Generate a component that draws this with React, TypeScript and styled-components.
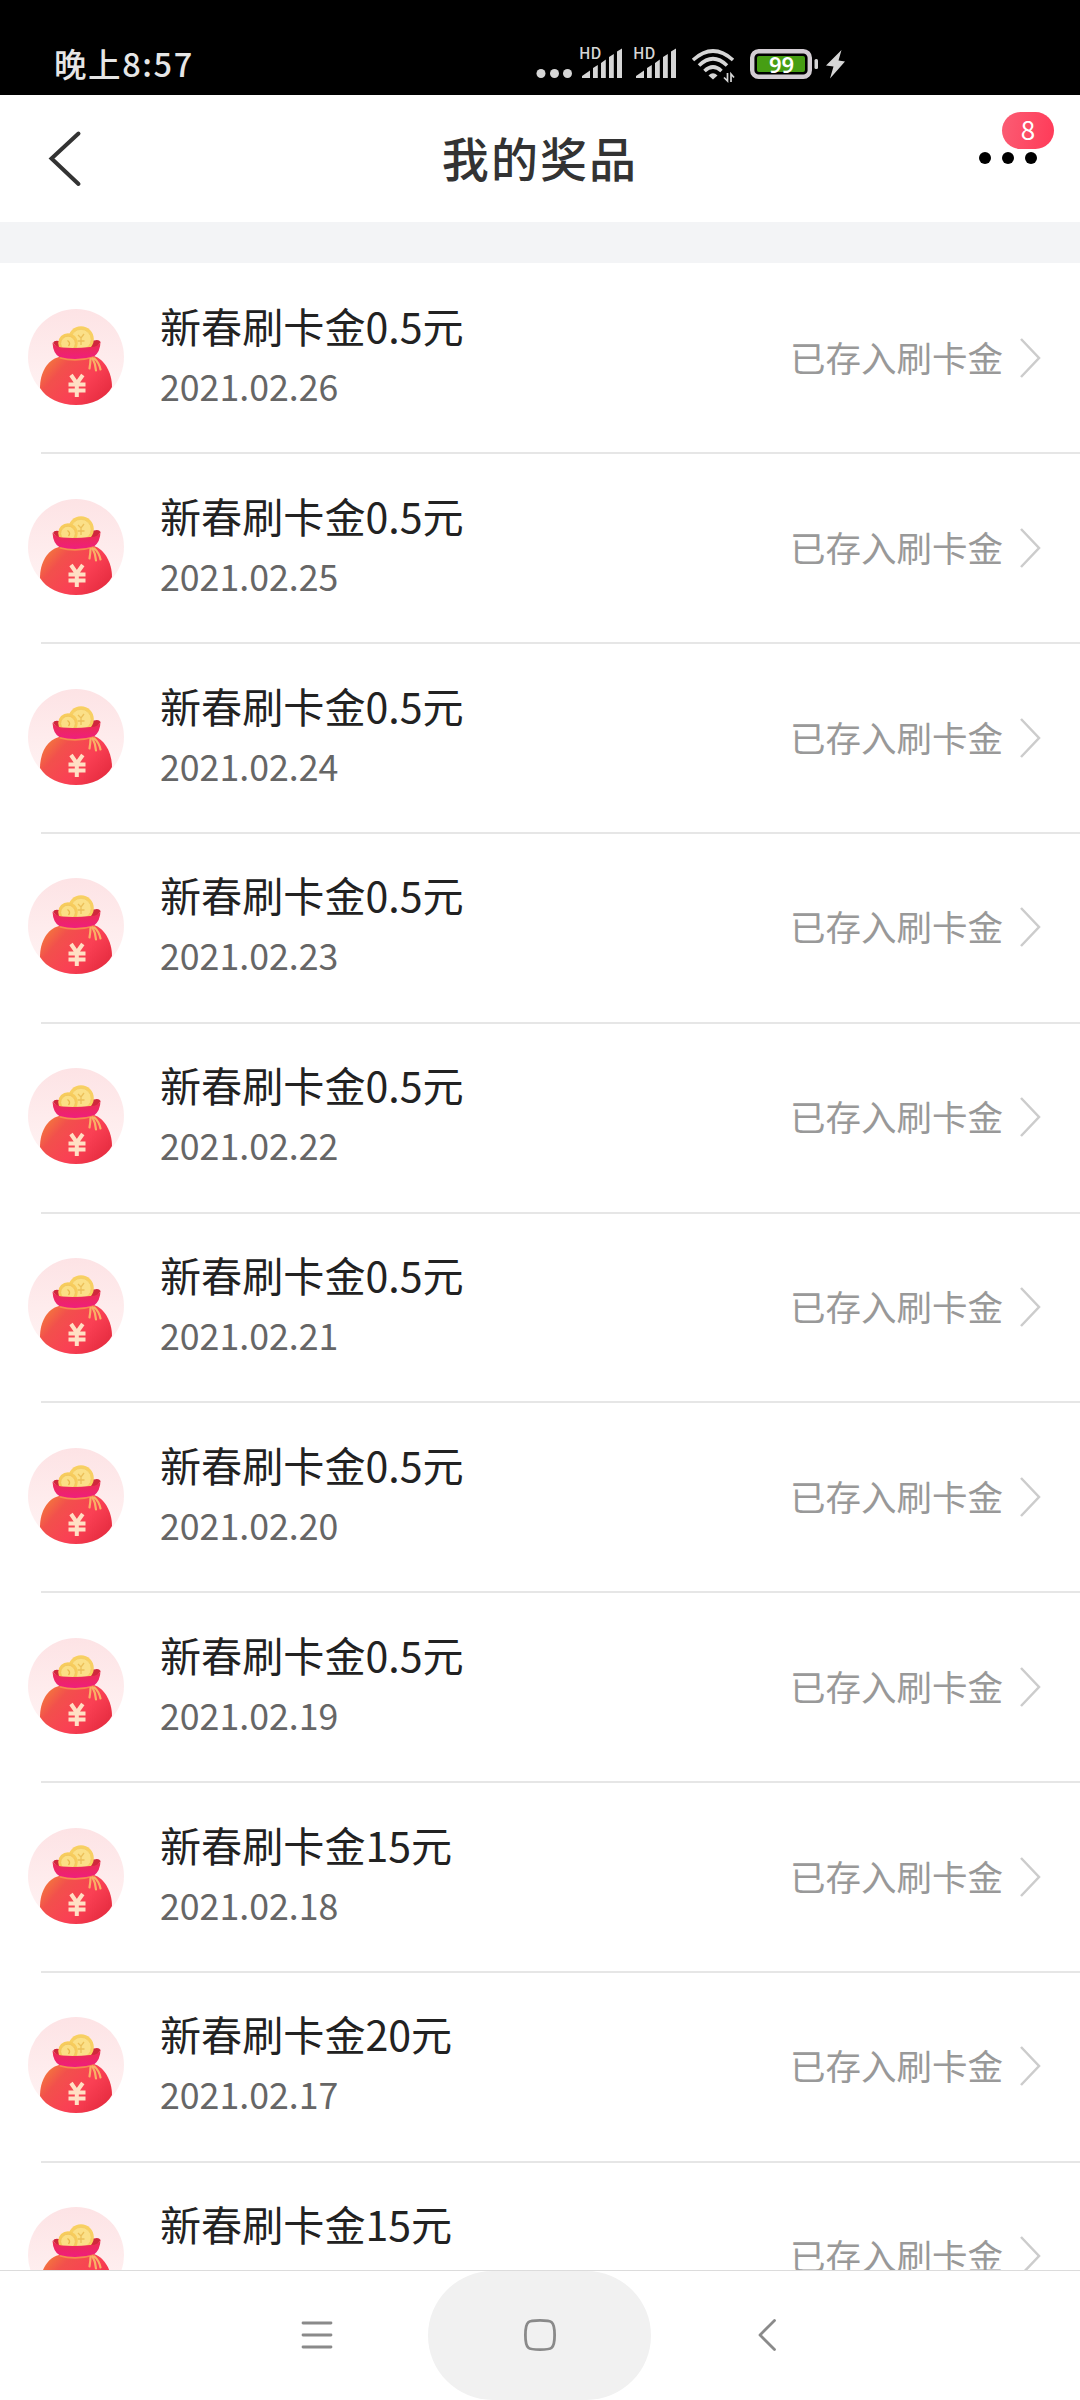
import React from "react";
import styled, { createGlobalStyle } from "styled-components";

const Global = createGlobalStyle`
  * { box-sizing: border-box; }
  body { margin: 0; background: #fff; }
`;

const Screen = styled.div`
  width: 1080px;
  height: 2400px;
  display: flex;
  flex-direction: column;
  overflow: hidden;
  background: #fff;
  font-family: "Noto Sans CJK SC", "Noto Sans", sans-serif;
`;

const StatusBar = styled.div`
  flex: none;
  height: 95px;
  background: #000;
  display: flex;
  align-items: flex-end;
  justify-content: space-between;
  padding: 0 220px 0 54px;
`;

const Clock = styled.div`
  font-size: 32.5px;
  line-height: 40px;
  font-weight: 500;
  letter-spacing: 1.6px;
  color: #e6e6e6;
  margin-bottom: 12px;
`;

const StatusIcons = styled.svg`
  display: block;
  width: 340px;
  height: 75px;
`;

const Header = styled.header`
  flex: none;
  height: 127px;
  display: grid;
  grid-template-columns: 160px 1fr 160px;
  align-items: center;
`;

const BackIcon = styled.svg`
  width: 60px;
  height: 70px;
  margin-left: 33px;
`;

const Title = styled.h1`
  margin: 0 0 4px;
  text-align: center;
  font-size: 47px;
  line-height: 60px;
  font-weight: 500;
  letter-spacing: 2.1px;
  color: #333;
`;

const More = styled.div`
  position: relative;
  display: flex;
  gap: 11px;
  padding-left: 59px;
  margin-bottom: 1px;
`;

const Dot = styled.span`
  width: 12px;
  height: 12px;
  border-radius: 50%;
  background: #000;
`;

const Badge = styled.span`
  position: absolute;
  left: 82px;
  top: -40px;
  width: 52px;
  height: 37px;
  border-radius: 19px;
  background: linear-gradient(100deg, #fb5d74, #ff3a58);
  color: #fff;
  font-size: 26px;
  line-height: 34px;
  text-align: center;
`;

const Gap = styled.div`
  flex: none;
  height: 41px;
  background: #f3f4f6;
`;

const List = styled.ul`
  flex: 1;
  min-height: 0;
  margin: 0;
  padding: 1.5px 0 0;
  list-style: none;
  overflow: hidden;
`;

const Row = styled.li`
  height: 189.83px;
  display: flex;
  align-items: center;
  padding: 0 39px 5px 28px;
  background: linear-gradient(#e6e6e6, #e6e6e6) 41px 100% / 100% 2px no-repeat;
`;

const BagIcon = styled.svg`
  flex: none;
  width: 96px;
  height: 96px;
`;

const Info = styled.div`
  flex: 1;
  height: 121px;
  margin: 0 0 3px 36px;
`;

const Name = styled.div`
  font-size: 41.1px;
  line-height: 60px;
  color: #222;
`;

const DateText = styled.div`
  font-size: 35.7px;
  line-height: 61px;
  color: #666;
`;

const State = styled.div`
  font-size: 35.5px;
  line-height: 52px;
  color: #999;
`;

const Arrow = styled.svg`
  width: 22px;
  height: 44px;
  margin: 2px 0 0 16px;
`;

const NavBar = styled.nav`
  flex: none;
  height: 130px;
  border-top: 1px solid #dcdcdc;
  background: #fff;
  display: flex;
  justify-content: center;
  padding-right: 2px;
`;

const NavButton = styled.div<{ $active?: boolean }>`
  width: 223px;
  height: 129px;
  border-radius: 65px;
  display: flex;
  align-items: center;
  justify-content: center;
  padding: 0 0 1px 2px;
  background: ${(p) => (p.$active ? "#f1f1f1" : "transparent")};
`;

const NavIcon = styled.svg`
  width: 40px;
  height: 40px;
  fill: none;
  stroke: #8a8a8a;
  stroke-width: 2.8;
  stroke-linecap: round;
  stroke-linejoin: round;
`;

const HdText = styled.text`
  font: 500 15.5px "Noto Sans CJK SC", sans-serif;
  fill: #d6d6d6;
`;

const BatteryText = styled.text`
  font: 600 22px "Noto Sans", sans-serif;
  fill: #fff;
`;

function Signal({ x }: { x: number }) {
  return (
    <g transform={`translate(${x} 0)`}>
      <HdText x="-2" y="39">HD</HdText>
      <path
        d="M1 58v-2l8-5.500v7.500zM12 58V48l4.800-3v13zM20 58V43l4.800-3.500v18.500zM28 58V37l4.800-3v24zM36 58V31.500l5-3v29.500z"
        fill="#d6d6d6"
      />
    </g>
  );
}

function Bag() {
  return (
    <BagIcon viewBox="0 0 96 96">
      <defs>
        <linearGradient id="disc" x1="0" y1="0" x2="0" y2="1">
          <stop offset="0" stopColor="#fde3e5" />
          <stop offset="1" stopColor="#fff4f4" />
        </linearGradient>
        <linearGradient id="sack" x1="0" y1="0.2" x2="1" y2="0.8">
          <stop offset="0" stopColor="#f47a3c" />
          <stop offset="0.25" stopColor="#f2504c" />
          <stop offset="0.6" stopColor="#fa4054" />
          <stop offset="1" stopColor="#e42a3e" />
        </linearGradient>
        <linearGradient id="rim" x1="0" y1="0" x2="0" y2="1">
          <stop offset="0" stopColor="#ea3148" />
          <stop offset="1" stopColor="#f01c80" />
        </linearGradient>
      </defs>
      <circle cx="48" cy="48" r="48" fill="url(#disc)" />
      <path
        d="M31 48C19 51 12 64 12 79C18 89 32 96 48 96C64 96 78 89 84 78C84 63 76 50 66 47Z"
        fill="url(#sack)"
      />
      <path d="M25 34q1-3 6-2l35-.5q5-1.500 6.500 1.500l-5 7.500H31z" fill="#d0283c" />
      <circle cx="53" cy="30" r="12.800" fill="#f8d062" />
      <circle cx="53" cy="30.500" r="10.200" fill="#fbe088" stroke="#f2ca64" strokeWidth="0.8" />
      <path d="M50 26l3 3 3-4M53 29v7M49.500 32h7" fill="none" stroke="#ecc05a" strokeWidth="1.300" />
      <circle cx="40" cy="34" r="9.800" fill="#f7cc5c" />
      <circle cx="40" cy="34.500" r="7.300" fill="#fbdf84" stroke="#efc25a" strokeWidth="0.8" />
      <path d="M39.500 31.500q3.500 2.500 1 5.500" fill="none" stroke="#eab84c" strokeWidth="1.400" />
      <path
        d="M24.500 33.500Q25 45 32 48.500Q48 53.500 65.500 48Q72.500 43 72.500 32.500Q70 38.500 62 38Q48 39.500 34 38.500Q28 38 24.500 33.500Z"
        fill="url(#rim)"
      />
      <path d="M31.500 48.800Q48 53.500 66 48" fill="none" stroke="#f6894e" strokeWidth="1.700" />
      <path
        d="M62.500 50q0 4-1 9.500M64.500 49.500q3 5 3.500 12M66.500 49.500q4.500 4 6 11"
        fill="none"
        stroke="#f9b066"
        strokeWidth="2.200"
        strokeLinecap="round"
      />
      <path
        d="M43 66l5.800 8.500 6-8.500M40.500 75.500h17M40.500 81.500h17M48.800 74v14"
        fill="none"
        stroke="#ffe0c4"
        strokeWidth="4"
      />
    </BagIcon>
  );
}

const prizes = [
  { amount: "0.5", date: "2021.02.26" },
  { amount: "0.5", date: "2021.02.25" },
  { amount: "0.5", date: "2021.02.24" },
  { amount: "0.5", date: "2021.02.23" },
  { amount: "0.5", date: "2021.02.22" },
  { amount: "0.5", date: "2021.02.21" },
  { amount: "0.5", date: "2021.02.20" },
  { amount: "0.5", date: "2021.02.19" },
  { amount: "15", date: "2021.02.18" },
  { amount: "20", date: "2021.02.17" },
  { amount: "15", date: "" },
];

export default function App() {
  return (
    <Screen>
      <Global />
      <StatusBar>
        <Clock>晚上8:57</Clock>
        <StatusIcons viewBox="0 0 340 75">
          <g fill="#d6d6d6">
            <circle cx="21" cy="53.500" r="4.500" />
            <circle cx="34.500" cy="53.500" r="4.500" />
            <circle cx="47.500" cy="53.500" r="4.500" />
          </g>
          <Signal x={61} />
          <Signal x={115} />
          <g fill="none" stroke="#d6d6d6" strokeWidth="3.600">
            <path d="M173 40Q193 22 213 40" />
            <path d="M179 45.500Q193 32 207 45.500" />
            <path d="M184.500 51Q193 43 201.500 51" />
          </g>
          <path d="M188.500 55.500q4.500-4.500 9 0l-4.500 4z" fill="#d6d6d6" />
          <path d="M204 57.500l3.500 3.500V53M211 62V54l3 3.500" fill="none" stroke="#d6d6d6" strokeWidth="1.700" />
          <rect x="232.200" y="31.200" width="57.600" height="25.600" rx="6.500" fill="none" stroke="#d3cdd3" strokeWidth="4.400" />
          <rect x="237" y="36" width="48" height="16" rx="2" fill="#469e13" />
          <BatteryText x="261.500" y="52.500" textAnchor="middle">99</BatteryText>
          <rect x="294.500" y="39" width="3.500" height="10" rx="1.500" fill="#d6d6d6" />
          <path d="M321.500 30L306 45.500l7.500 1L310 58.500 325 41.500l-6.500-1z" fill="#d6d6d6" />
        </StatusIcons>
      </StatusBar>
      <Header>
        <BackIcon viewBox="0 0 60 70" fill="none" stroke="#333" strokeWidth="4" strokeLinecap="round">
          <path d="M45.500 9.500L18.500 34.500L45.500 60" />
        </BackIcon>
        <Title>我的奖品</Title>
        <More>
          <Dot />
          <Dot />
          <Dot />
          <Badge>8</Badge>
        </More>
      </Header>
      <Gap />
      <List>
        {prizes.map(({ amount, date }, i) => (
          <Row key={i}>
            <Bag />
            <Info>
              <Name>新春刷卡金{amount}元</Name>
              {date && <DateText>{date}</DateText>}
            </Info>
            <State>已存入刷卡金</State>
            <Arrow viewBox="0 0 22 44" fill="none" stroke="#ccc" strokeWidth="2.500">
              <path d="M2 3L20 22L2 41" />
            </Arrow>
          </Row>
        ))}
      </List>
      <NavBar>
        <NavButton>
          <NavIcon viewBox="0 0 40 40">
            <path d="M6 8h28M6 20h28M6 32h28" />
          </NavIcon>
        </NavButton>
        <NavButton $active>
          <NavIcon viewBox="0 0 40 40">
            <path d="M20 5.400C31.500 5.400 34.600 5.400 34.600 20S31.500 34.600 20 34.600 5.400 34.600 5.400 20 8.500 5.400 20 5.400Z" />
          </NavIcon>
        </NavButton>
        <NavButton>
          <NavIcon viewBox="0 0 40 40">
            <path d="M31.500 5.500L17 20L31.500 34.500" />
          </NavIcon>
        </NavButton>
      </NavBar>
    </Screen>
  );
}
